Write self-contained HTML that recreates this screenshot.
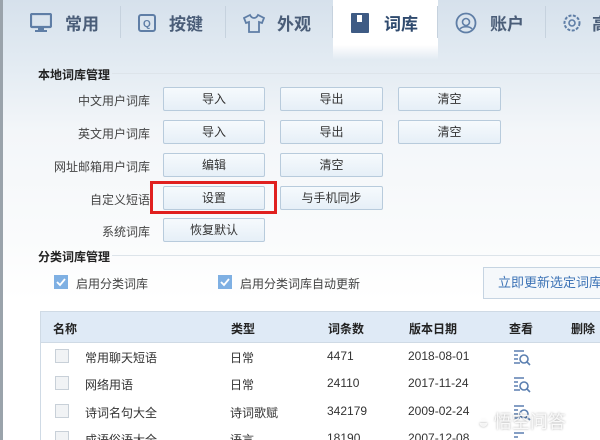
<!DOCTYPE html><html style="width:600px;height:440px;overflow:hidden"><head><meta charset="utf-8"><style>
*{margin:0;padding:0;box-sizing:border-box}
body{width:600px;height:440px;overflow:hidden;font-family:"Liberation Sans","Noto Sans CJK SC",sans-serif;background:linear-gradient(180deg,#d6e1ec 0,#e4ecf3 70px,#f3f6f9 130px,#fafbfc 240px,#fff 300px);position:relative;color:#333;font-size:12px}
.a{position:absolute}
.tab{position:absolute;top:0;height:45px;display:flex;align-items:center;font-size:17px;font-weight:bold;color:#4a5d78}
.sep{position:absolute;top:6px;width:1px;height:32px;background:#c6d2de}
.btn{position:absolute;height:24px;border:1px solid #b8cbdc;background:linear-gradient(#f6fafd,#e6eff7);text-align:center;line-height:22px;font-size:12px;color:#333;border-radius:2px}
.lbl{position:absolute;width:120px;text-align:right;left:30px;font-size:12px;color:#444}
.cb{position:absolute;width:14px;height:14px;border:1px solid #c8d0d8;background:#f1f3f5}
.cbc{position:absolute;width:14px;height:14px;background:#7fb0e3}
.row{position:absolute;left:40px;width:560px;height:27px;font-size:12px}
.row span{position:absolute;top:6px}
</style></head><body>
<div class="a" style="left:0;top:0;width:3px;height:440px;background:#9aa3ab"></div>
<div class="a" style="left:333px;top:0;width:105px;height:60px;background:linear-gradient(#fff,#fff 45px,rgba(255,255,255,0))"></div>
<div class="tab" style="left:30px"><svg width="22" height="20" viewBox="0 0 22 20"><rect x="1" y="1" width="20" height="13" rx="1" fill="none" stroke="#5f7ea6" stroke-width="2.2"/><rect x="8" y="15" width="6" height="2" fill="#5f7ea6"/><rect x="5" y="17" width="12" height="2" fill="#5f7ea6"/></svg><span style="margin-left:13px">常用</span></div>
<div class="sep" style="left:120px"></div>
<div class="tab" style="left:138px"><svg width="18" height="18"><rect x="1" y="1" width="16" height="16" rx="2" fill="none" stroke="#5f7ea6" stroke-width="2"/><text x="5" y="13" font-size="10" fill="#5f7ea6">Q</text></svg><span style="margin-left:13px">按键</span></div>
<div class="sep" style="left:225px"></div>
<div class="tab" style="left:243px"><svg width="22" height="20" viewBox="0 0 22 20"><path d="M7 2L1 5l2 5 3-1v10h10V9l3 1 2-5-6-3c-1 2-2 3-4 3S8 4 7 2z" fill="none" stroke="#5f7ea6" stroke-width="1.8"/></svg><span style="margin-left:12px">外观</span></div>
<div class="sep" style="left:332px"></div>
<div class="tab" style="left:351px;color:#2f4a6e"><svg width="18" height="20"><rect x="0" y="0" width="18" height="20" rx="1" fill="#3e5b84"/><rect x="6" y="2" width="5" height="7" fill="#fff"/></svg><span style="margin-left:15px">词库</span></div>
<div class="sep" style="left:437px"></div>
<div class="tab" style="left:455px"><svg width="22" height="22"><circle cx="11" cy="11" r="9.5" fill="none" stroke="#5f7ea6" stroke-width="1.8"/><circle cx="11" cy="10" r="3.5" fill="none" stroke="#5f7ea6" stroke-width="1.6"/><path d="M5 17c2-3 10-3 12 0" fill="none" stroke="#5f7ea6" stroke-width="1.6"/></svg><span style="margin-left:13px">账户</span></div>
<div class="sep" style="left:545px"></div>
<div class="tab" style="left:562px"><svg width="20" height="20"><circle cx="10" cy="10" r="7.5" fill="none" stroke="#5f7ea6" stroke-width="2" stroke-dasharray="3 1.5"/><circle cx="10" cy="10" r="3" fill="none" stroke="#5f7ea6" stroke-width="1.6"/></svg><span style="margin-left:10px">高</span></div>

<div class="a" style="left:38px;top:66px;font-size:12px;font-weight:bold;color:#222">本地词库管理</div>
<div class="a" style="left:112px;top:73px;width:488px;height:1px;background:#dde4ea"></div>

<div class="lbl" style="top:92px">中文用户词库</div>
<div class="btn" style="left:163px;top:87px;width:102px">导入</div>
<div class="btn" style="left:280px;top:87px;width:103px">导出</div>
<div class="btn" style="left:398px;top:87px;width:103px">清空</div>
<div class="lbl" style="top:125px">英文用户词库</div>
<div class="btn" style="left:163px;top:120px;width:102px">导入</div>
<div class="btn" style="left:280px;top:120px;width:103px">导出</div>
<div class="btn" style="left:398px;top:120px;width:103px">清空</div>
<div class="lbl" style="top:158px">网址邮箱用户词库</div>
<div class="btn" style="left:163px;top:153px;width:102px">编辑</div>
<div class="btn" style="left:280px;top:153px;width:103px">清空</div>
<div class="lbl" style="top:191px">自定义短语</div>
<div class="btn" style="left:163px;top:186px;width:102px">设置</div>
<div class="btn" style="left:280px;top:186px;width:103px">与手机同步</div>
<div class="a" style="left:150px;top:181px;width:127px;height:33px;border:3px solid #e0201f"></div>
<div class="lbl" style="top:223px">系统词库</div>
<div class="btn" style="left:163px;top:218px;width:102px">恢复默认</div>

<div class="a" style="left:38px;top:248px;font-size:12px;font-weight:bold;color:#222">分类词库管理</div>
<div class="a" style="left:112px;top:255px;width:488px;height:1px;background:#dde4ea"></div>
<div class="cbc" style="left:54px;top:275px"></div><svg class="a" style="left:54px;top:275px" width="14" height="14"><path d="M3 7l3 3 5-6" fill="none" stroke="#fff" stroke-width="1.8"/></svg>
<div class="a" style="left:76px;top:275px;color:#444">启用分类词库</div>
<div class="cbc" style="left:218px;top:275px"></div><svg class="a" style="left:218px;top:275px" width="14" height="14"><path d="M3 7l3 3 5-6" fill="none" stroke="#fff" stroke-width="1.8"/></svg>
<div class="a" style="left:240px;top:275px;color:#444">启用分类词库自动更新</div>
<div class="a" style="left:483px;top:267px;width:117px;height:32px;border:1px solid #c6d4e2;border-right:none;background:#f5f8fb;color:#3d73b6;font-size:13px;line-height:30px;padding-left:14px;white-space:nowrap;overflow:hidden">立即更新选定词库</div>

<div class="a" style="left:40px;top:311px;width:560px;height:129px;border:1px solid #cfdae5;border-right:none;border-bottom:none;background:#fff"></div>
<div class="a" style="left:40px;top:311px;width:560px;height:32px;background:#dfeaf6;border:1px solid #cfdae5;border-right:none;font-weight:bold;font-size:12px;color:#222">
<span class="a" style="left:12px;top:8px">名称</span><span class="a" style="left:190px;top:8px">类型</span><span class="a" style="left:287px;top:8px">词条数</span><span class="a" style="left:368px;top:8px">版本日期</span><span class="a" style="left:468px;top:8px">查看</span><span class="a" style="left:530px;top:8px">删除</span></div>

<div class="row" style="top:343px"><div class="cb" style="left:15px;top:6px"></div><span style="left:45px">常用聊天短语</span><span style="left:190px">日常</span><span style="left:287px">4471</span><span style="left:368px">2018-08-01</span></div>
<div class="row" style="top:370px"><div class="cb" style="left:15px;top:6px"></div><span style="left:45px">网络用语</span><span style="left:190px">日常</span><span style="left:287px">24110</span><span style="left:368px">2017-11-24</span></div>
<div class="row" style="top:398px"><div class="cb" style="left:15px;top:6px"></div><span style="left:45px">诗词名句大全</span><span style="left:190px">诗词歌赋</span><span style="left:287px">342179</span><span style="left:368px">2009-02-24</span></div>
<div class="row" style="top:425px"><div class="cb" style="left:15px;top:6px"></div><span style="left:45px">成语俗语大全</span><span style="left:190px">语言</span><span style="left:287px">18190</span><span style="left:368px">2007-12-08</span></div>
<svg class="a" style="left:513px;top:349px" width="20" height="90">
<g fill="none" stroke="#5b7fb0" stroke-width="1.6">
<path d="M1 2h10M1 6h4M1 10h4M1 14h6"/><circle cx="11" cy="10" r="4"/><path d="M14 13l3 3"/>
<path d="M1 29h10M1 33h4M1 37h4M1 41h6"/><circle cx="11" cy="37" r="4"/><path d="M14 40l3 3"/>
<path d="M1 57h10M1 61h4M1 65h4M1 69h6"/><circle cx="11" cy="65" r="4"/><path d="M14 68l3 3"/>
<path d="M1 84h10M1 88h4"/></g></svg>
<div class="a" style="left:478px;top:408px;font-size:18px;color:rgba(255,255,255,.85);text-shadow:0 0 2px rgba(0,0,0,.35)">◒ 悟空问答</div>
</body></html>
